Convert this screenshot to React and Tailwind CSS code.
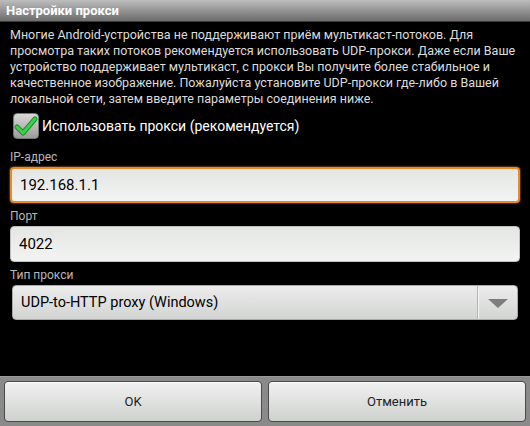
import { useState } from 'react';

const FONT = { fontFamily: '"Roboto", "Noto Sans", "DejaVu Sans", sans-serif' };

function Field({ label, value, focused }) {
  return (
    <div className="flex flex-col">
      <div className="h-[20px] pl-[10px] pt-[3px] text-[12px] leading-[14px] text-[#b8b8b8]">{label}</div>
      <div
        className={`mx-[10px] flex h-[36px] items-center rounded-[4px] bg-gradient-to-b from-[#e4e6e4] to-[#f2f3f2] pl-[8px] text-[15px] text-black ${
          focused ? 'border-[2px] border-[#e8892c] shadow-[0_0_2px_#f5a54a]' : 'border border-[#bfc1bf]'
        }`}
      >
        {value}
      </div>
    </div>
  );
}

export default function App() {
  const [checked] = useState(true);

  return (
    <div className="flex h-[426px] w-[530px] flex-col bg-black" style={FONT}>
      {/* title */}
      <div className="flex h-[22px] items-center border-b border-[#3a3a3a] bg-gradient-to-b from-[#bdbdbd] to-[#6d6d6d] pl-[6px] text-[13px] font-bold text-white">
        Настройки прокси
      </div>

      <div className="flex flex-1 flex-col">
        <p className="px-[10px] pt-[5px] text-[12.5px] leading-[16px] text-[#dcdcdc]">
          Многие Android-устройства не поддерживают приём мультикаст-потоков. Для просмотра таких потоков рекомендуется использовать UDP-прокси. Даже если Ваше устройство поддерживает мультикаст, с прокси Вы получите более стабильное и качественное изображение. Пожалуйста установите UDP-прокси где-либо в Вашей локальной сети, затем введите параметры соединения ниже.
        </p>

        <div className="mt-[6px] flex items-center gap-[3px] pl-[13px]">
          <div className="flex h-[26px] w-[26px] items-center justify-center rounded-[4px] border border-[#777] bg-gradient-to-b from-[#d8d8d8] to-[#9c9c9c]">
            {checked && (
              <svg width="24" height="22" viewBox="0 0 24 22">
                <path d="M3 12 L9 18 L21 4" fill="none" stroke="#1f8f2e" strokeWidth="5" strokeLinecap="round" strokeLinejoin="round" />
                <path d="M3 12 L9 18 L21 4" fill="none" stroke="#3ccf4e" strokeWidth="3" strokeLinecap="round" strokeLinejoin="round" />
              </svg>
            )}
          </div>
          <span className="text-[14px] text-white">Использовать прокси (рекомендуется)</span>
        </div>

        <div className="mt-[8px] flex flex-col gap-[3px]">
          <Field label="IP-адрес" value="192.168.1.1" focused />
          <Field label="Порт" value="4022" />
          <div className="flex flex-col">
            <div className="h-[20px] pl-[10px] pt-[3px] text-[12px] leading-[14px] text-[#b8b8b8]">Тип прокси</div>
            <div className="mx-[12px] flex h-[35px] items-center rounded-[4px] border border-[#aaa] bg-gradient-to-b from-[#ececec] to-[#d2d4d2]">
              <span className="flex-1 pl-[8px] text-[14.5px] text-black">UDP-to-HTTP proxy (Windows)</span>
              <div className="flex h-full w-[40px] items-center justify-center border-l border-[#b4b4b4] shadow-[inset_1px_0_0_#f4f4f4]">
                <svg width="22" height="12" viewBox="0 0 22 12">
                  <path d="M1 2 H21 L11 11 Z" fill="#7e7e7e" />
                </svg>
              </div>
            </div>
          </div>
        </div>
      </div>

      {/* buttons */}
      <div className="flex h-[50px] gap-[6px] border-t border-[#9a9a9a] bg-[#8a8a8a] px-[4px] pt-[4px] pb-[4px]">
        <button className="flex-1 rounded-[4px] border border-[#4a4a4a] bg-gradient-to-b from-[#f0f1f0] to-[#cfd1cf] text-[13px] text-[#222] shadow-[inset_0_1px_0_#fff]">
          OK
        </button>
        <button className="flex-1 rounded-[4px] border border-[#4a4a4a] bg-gradient-to-b from-[#f0f1f0] to-[#cfd1cf] text-[13px] text-[#222] shadow-[inset_0_1px_0_#fff]">
          Отменить
        </button>
      </div>
    </div>
  );
}
